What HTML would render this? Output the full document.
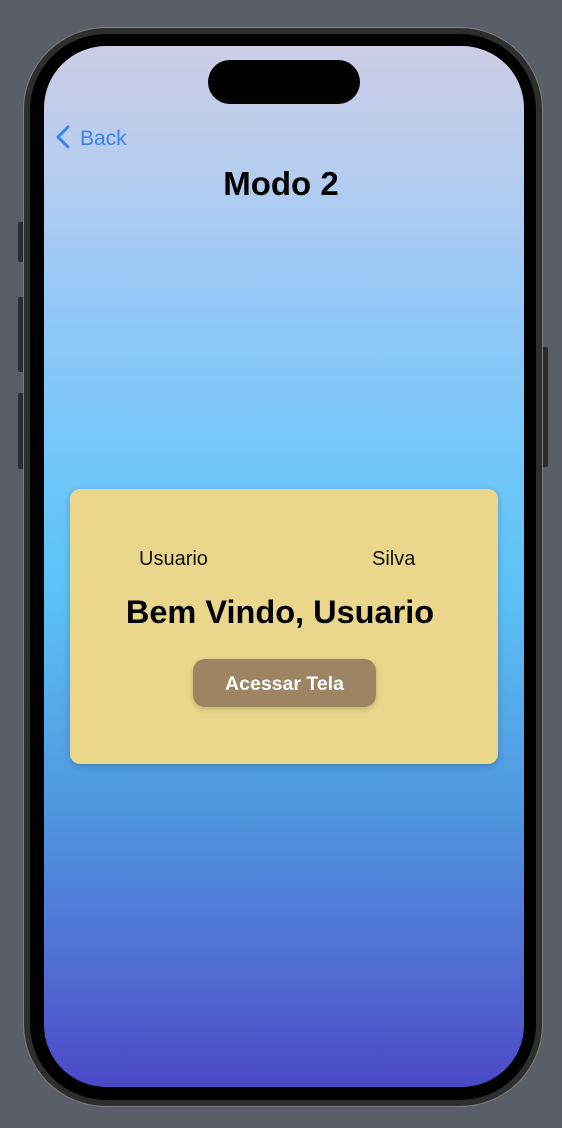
<!DOCTYPE html>
<html><head><style>
body{margin:0;width:562px;height:1128px;background:#5a5e66;position:relative;overflow:hidden;font-family:"Liberation Sans",sans-serif}
.btn{position:absolute;background:#2a2c30;border-radius:2px}
.phone{position:absolute;left:24px;top:28px;width:518px;height:1078px;border-radius:82px;background:#2e2e2e;box-shadow:0 0 0 1px #7a7c80}
.bezel{position:absolute;left:30px;top:34px;width:506px;height:1066px;border-radius:76px;background:#000}
.screen{position:absolute;left:44px;top:46px;width:480px;height:1041px;border-radius:62px;overflow:hidden;
background:linear-gradient(180deg,#cdcde5 0%,#b5cdef 12%,#93c8f8 25%,#6ec6f9 42%,#5dc2f8 52%,#4f97de 73%,#5172d5 87%,#4b48c6 100%)}
.island{position:absolute;left:164px;top:14px;width:152px;height:44px;border-radius:22px;background:#000}
.back{position:absolute;left:11px;top:79px;color:#3a82f0;font-size:21px}
.title{position:absolute;left:-3px;width:480px;top:119px;text-align:center;font-weight:bold;font-size:33px;color:#000}
.card{position:absolute;left:26px;top:443px;width:428px;height:275px;border-radius:10px;background:#ebd78c;box-shadow:0 2px 8px rgba(0,0,0,.2)}
.t{position:absolute;font-size:20px;color:#111}
.big{position:absolute;left:-4px;width:428px;top:105px;text-align:center;font-weight:bold;font-size:32.5px;color:#000}
.b{position:absolute;left:123px;top:170px;width:183px;height:48px;border-radius:12px;background:#9d8563;color:#fff;font-weight:bold;font-size:19.5px;text-align:center;line-height:50px;box-shadow:0 2px 6px rgba(0,0,0,.2)}
</style></head><body>
<div class="btn" style="left:18px;top:222px;width:7px;height:40px"></div>
<div class="btn" style="left:18px;top:297px;width:7px;height:75px"></div>
<div class="btn" style="left:18px;top:393px;width:7px;height:76px"></div>
<div class="btn" style="left:541px;top:347px;width:7px;height:120px"></div>
<div class="phone"></div><div class="bezel"></div>
<div class="screen">
<div class="island"></div>
<div class="back"><svg width="15" height="24" viewBox="0 0 15 24" style="vertical-align:-4px;margin-right:10px"><path d="M13 2 L3 12 L13 22" fill="none" stroke="#3a82f0" stroke-width="3" stroke-linecap="round" stroke-linejoin="round"/></svg>Back</div>
<div class="title">Modo 2</div>
<div class="card">
<div class="t" style="left:69px;top:59px">Usuario</div>
<div class="t" style="left:302px;top:59px">Silva</div>
<div class="big">Bem Vindo, Usuario</div>
<div class="b">Acessar Tela</div>
</div>
</div>
</body></html>
